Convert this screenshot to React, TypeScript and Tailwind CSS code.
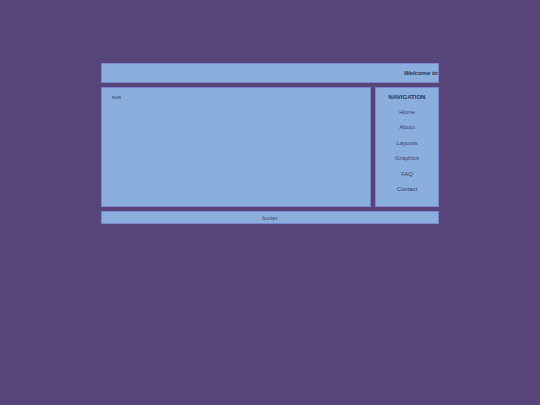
import React from "react";

const links = ["Home", "About", "Layouts", "Graphics", "FAQ", "Contact"];

const App = () => {
  return (
    <div className="min-h-screen w-full bg-[#574479] pt-[63px] font-['Liberation_Sans',Arial,sans-serif] text-[6px] leading-[8px] text-[#3d4260]">
      <div className="mx-auto flex w-[338px] flex-col gap-[4px]">
        <header className="flex h-[20px] items-center overflow-hidden border border-[#7d86cc] bg-[#8aafdc] pl-[302px]">
          <p className="whitespace-nowrap font-bold italic text-[#2f3350]">Welcome to the site</p>
        </header>
        <div className="flex h-[120px] gap-[4px]">
          <main className="w-[270px] border border-[#7d86cc] bg-[#8aafdc] px-[10px] pt-[5px]">
            <p>sus</p>
          </main>
          <nav className="flex w-[64px] flex-col items-center border border-[#7d86cc] bg-[#8aafdc] pt-[5px]">
            <h2 className="font-bold text-[#2f3350]">NAVIGATION</h2>
            <ul className="mt-[7px] flex flex-col items-center gap-[7.4px]">
              {links.map((link) => (
                <li key={link}>{link}</li>
              ))}
            </ul>
          </nav>
        </div>
        <footer className="flex h-[13px] items-center justify-center border border-[#7d86cc] bg-[#8aafdc]">
          <p>footer</p>
        </footer>
      </div>
    </div>
  );
};

export default App;
